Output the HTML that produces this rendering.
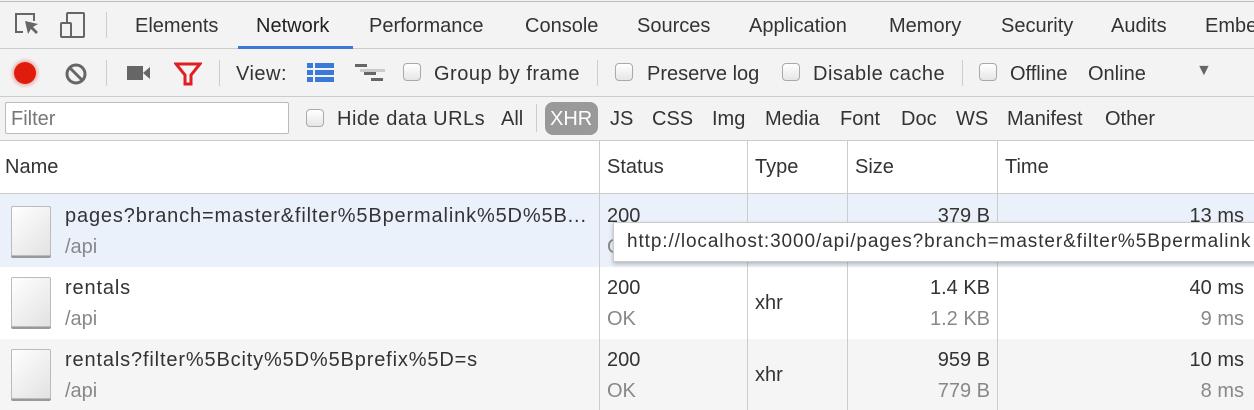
<!DOCTYPE html>
<html><head><style>
*{margin:0;padding:0;box-sizing:border-box}
body{width:1254px;height:410px;overflow:hidden;font-family:"Liberation Sans",sans-serif;font-size:20px;color:#333;background:#fff;position:relative}
.a{position:absolute;white-space:nowrap}
.d{letter-spacing:0.85px}
.t{letter-spacing:0.5px}
.cb{position:absolute;width:18px;height:18px;border:1px solid #aaa;border-radius:4px;background:linear-gradient(#fff,#e6e6e6)}
.vl{position:absolute;width:1px;background:#ccc}
.hl{position:absolute;left:0;width:1254px;height:1px;background:#ccc}
.doc{position:absolute;left:11px;width:40px;height:50px;border:1px solid #bbb;border-radius:2px;background:linear-gradient(135deg,#fff,#e2e2e2);box-shadow:0 2px 0 #999}
.g{color:#888}
</style></head><body>
<div class="a" style="left:0;top:0;width:1254px;height:140px;background:#f3f3f3"></div>
<div class="hl" style="top:1px;background:#bbb"></div>
<div class="hl" style="top:48px"></div>
<div class="hl" style="top:96px"></div>
<div class="hl" style="top:140px"></div>
<div class="hl" style="top:193px"></div>
<svg class="a" style="left:14px;top:12px" width="26" height="26" viewBox="0 0 26 26"><path d="M9 20H2V2h18v7" fill="none" stroke="#666" stroke-width="2"/><path d="M11 9l3 13 3-5 5 5 2-2-5-5 5-3z" fill="#666"/></svg>
<svg class="a" style="left:59px;top:11px" width="28" height="28" viewBox="0 0 28 28"><rect x="8" y="2" width="17" height="24" rx="1" fill="none" stroke="#666" stroke-width="2"/><rect x="2" y="12" width="10" height="14" rx="1" fill="#f3f3f3" stroke="#666" stroke-width="2"/></svg>
<div class="vl" style="left:106px;top:12px;height:26px"></div>
<div class="a" style="left:135px;top:15px">Elements</div>
<div class="a" style="left:256px;top:15px;color:#222">Network</div>
<div class="a" style="left:238px;top:46px;width:115px;height:3px;background:#3879d9"></div>
<div class="a" style="left:369px;top:15px">Performance</div>
<div class="a" style="left:525px;top:15px">Console</div>
<div class="a" style="left:637px;top:15px">Sources</div>
<div class="a" style="left:749px;top:15px">Application</div>
<div class="a" style="left:889px;top:15px">Memory</div>
<div class="a" style="left:1001px;top:15px">Security</div>
<div class="a" style="left:1111px;top:15px">Audits</div>
<div class="a" style="left:1205px;top:15px">Ember</div>
<div class="a" style="left:14px;top:62px;width:22px;height:22px;border-radius:50%;background:#e01c0c;box-shadow:0 0 3px 2px rgba(230,80,80,.4)"></div>
<svg class="a" style="left:64px;top:62px" width="24" height="24" viewBox="0 0 24 24"><circle cx="12" cy="12" r="9" fill="none" stroke="#666" stroke-width="3"/><path d="M6 6l12 12" stroke="#666" stroke-width="3"/></svg>
<div class="vl" style="left:106px;top:60px;height:26px"></div>
<svg class="a" style="left:127px;top:64px" width="24" height="18" viewBox="0 0 24 18"><rect x="0" y="2" width="16" height="14" fill="#666"/><path d="M16 9l7-6v12z" fill="#666"/></svg>
<svg class="a" style="left:174px;top:62px" width="28" height="24" viewBox="0 0 28 24"><path d="M2 2h24l-9 11v9h-6v-9z" fill="none" stroke="#e02020" stroke-width="3"/></svg>
<div class="vl" style="left:219px;top:60px;height:26px"></div>
<div class="a t" style="left:236px;top:63px">View:</div>
<svg class="a" style="left:307px;top:63px" width="27" height="20"><rect x="0" y="0" width="6" height="5" fill="#3879d9"/><rect x="8" y="0" width="19" height="5" fill="#3879d9"/><rect x="0" y="7" width="6" height="5" fill="#3879d9"/><rect x="8" y="7" width="19" height="5" fill="#3879d9"/><rect x="0" y="14" width="6" height="5" fill="#3879d9"/><rect x="8" y="14" width="19" height="5" fill="#3879d9"/></svg>
<svg class="a" style="left:355px;top:63px" width="30" height="22"><rect x="0" y="1" width="12" height="3" fill="#666"/><rect x="5" y="6" width="25" height="3" fill="#ccc"/><rect x="9" y="9" width="12" height="3" fill="#666"/><rect x="16" y="15" width="12" height="3" fill="#666"/></svg>
<div class="cb" style="left:403px;top:63px"></div>
<div class="a t" style="left:434px;top:63px">Group by frame</div>
<div class="vl" style="left:597px;top:60px;height:26px"></div>
<div class="cb" style="left:615px;top:63px"></div>
<div class="a" style="left:647px;top:63px">Preserve log</div>
<div class="cb" style="left:782px;top:63px"></div>
<div class="a t" style="left:813px;top:63px">Disable cache</div>
<div class="vl" style="left:962px;top:60px;height:26px"></div>
<div class="cb" style="left:979px;top:63px"></div>
<div class="a" style="left:1010px;top:63px">Offline</div>
<div class="a" style="left:1088px;top:63px">Online</div>
<div class="a" style="left:1196px;top:62px;font-size:16px;color:#666">▼</div>
<div class="a" style="left:5px;top:102px;width:284px;height:32px;border:1px solid #bbb;border-radius:2px;background:#fff"></div>
<div class="a" style="left:11px;top:108px;color:#777">Filter</div>
<div class="cb" style="left:306px;top:109px"></div>
<div class="a t" style="left:337px;top:108px">Hide data URLs</div>
<div class="a" style="left:501px;top:108px">All</div>
<div class="vl" style="left:536px;top:104px;height:28px"></div>
<div class="a" style="left:545px;top:102px;width:53px;height:33px;border-radius:8px;background:#999"></div>
<div class="a" style="left:550px;top:108px;color:#fff">XHR</div>
<div class="a" style="left:610px;top:108px">JS</div>
<div class="a" style="left:652px;top:108px">CSS</div>
<div class="a" style="left:712px;top:108px">Img</div>
<div class="a" style="left:765px;top:108px">Media</div>
<div class="a" style="left:840px;top:108px">Font</div>
<div class="a" style="left:901px;top:108px">Doc</div>
<div class="a" style="left:956px;top:108px">WS</div>
<div class="a" style="left:1007px;top:108px">Manifest</div>
<div class="a" style="left:1105px;top:108px">Other</div>
<div class="a" style="left:5px;top:156px">Name</div>
<div class="a" style="left:607px;top:156px">Status</div>
<div class="a" style="left:755px;top:156px">Type</div>
<div class="a" style="left:855px;top:156px">Size</div>
<div class="a" style="left:1005px;top:156px">Time</div>
<div class="a" style="left:0;top:194px;width:1254px;height:73px;background:#ebf1fb"></div>
<div class="a" style="left:0;top:339px;width:1254px;height:71px;background:#f5f5f5"></div>
<div class="vl" style="left:599px;top:141px;height:269px"></div>
<div class="vl" style="left:747px;top:141px;height:269px"></div>
<div class="vl" style="left:847px;top:141px;height:269px"></div>
<div class="vl" style="left:997px;top:141px;height:269px"></div>
<div class="doc" style="top:206px"></div>
<div class="a d" style="left:65px;top:205px">pages?branch=master&amp;filter%5Bpermalink%5D%5B...</div>
<div class="a g" style="left:65px;top:236px">/api</div>
<div class="a" style="left:607px;top:205px">200</div>
<div class="a g" style="left:607px;top:236px">OK</div>
<div class="a" style="right:264px;top:205px">379 B</div>
<div class="a" style="right:10px;top:205px">13 ms</div>
<div class="doc" style="top:277px"></div>
<div class="a d" style="left:65px;top:277px">rentals</div>
<div class="a g" style="left:65px;top:308px">/api</div>
<div class="a" style="left:607px;top:277px">200</div>
<div class="a g" style="left:607px;top:308px">OK</div>
<div class="a" style="left:755px;top:292px">xhr</div>
<div class="a" style="right:264px;top:277px">1.4 KB</div>
<div class="a g" style="right:264px;top:308px">1.2 KB</div>
<div class="a" style="right:10px;top:277px">40 ms</div>
<div class="a g" style="right:10px;top:308px">9 ms</div>
<div class="doc" style="top:349px"></div>
<div class="a d" style="left:65px;top:349px">rentals?filter%5Bcity%5D%5Bprefix%5D=s</div>
<div class="a g" style="left:65px;top:380px">/api</div>
<div class="a" style="left:607px;top:349px">200</div>
<div class="a g" style="left:607px;top:380px">OK</div>
<div class="a" style="left:755px;top:364px">xhr</div>
<div class="a" style="right:264px;top:349px">959 B</div>
<div class="a g" style="right:264px;top:380px">779 B</div>
<div class="a" style="right:10px;top:349px">10 ms</div>
<div class="a g" style="right:10px;top:380px">8 ms</div>
<div class="a" style="left:613px;top:222px;width:660px;height:40px;background:#fff;border:1px solid #ccc;box-shadow:0 2px 4px rgba(0,0,0,.25);padding:8px 0 0 13px;font-size:19px;letter-spacing:0.9px;overflow:hidden">http://localhost:3000/api/pages?branch=master&amp;filter%5Bpermalink</div>
</body></html>
